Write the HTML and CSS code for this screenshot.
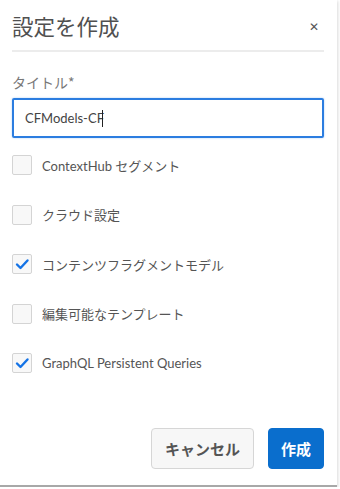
FILE: index.html
```html
<!DOCTYPE html>
<html lang="ja">
<head>
  <meta charset="UTF-8">
  <meta name="viewport" content="width=device-width, initial-scale=1.0">
  <title>設定を作成</title>
  <link rel="stylesheet" href="styles.css">
</head>
<body>

<div class="dialog">
  <div class="header">
    <h1>設定を作成</h1>
    <span class="close">&#x2715;</span>
  </div>

  <label class="field-label">タイトル*</label>
  <div class="input"><span>CFModels-CF</span><span class="caret"></span></div>

  <ul class="options">
    <li><span class="box"></span>ContextHub セグメント</li>
    <li><span class="box"></span>クラウド設定</li>
    <li><span class="box checked"><svg viewBox="0 0 18 18"><path d="M4 9.5 L7.5 13 L14.5 5.5"/></svg></span>コンテンツフラグメントモデル</li>
    <li><span class="box"></span>編集可能なテンプレート</li>
    <li><span class="box checked"><svg viewBox="0 0 18 18"><path d="M4 9.5 L7.5 13 L14.5 5.5"/></svg></span>GraphQL Persistent Queries</li>
  </ul>

  <div class="footer">
    <button class="btn cancel">キャンセル</button>
    <button class="btn primary">作成</button>
  </div>
</div>

</body>
</html>
```

FILE: styles.css
```css
body {
  margin: 0;
  background-color: #ffffff;
  font-family: Lato, "Noto Sans CJK JP", sans-serif;
  color: #4b4b4b;
}
.dialog {
  width: 337px;
  height: 487px;
  box-sizing: border-box;
  padding: 0 13px 0 12px;
  background: #fff;
  border-bottom: 2px solid #a8a8a8;
  box-shadow: 1px 1px 3px rgba(0, 0, 0, 0.15);
  display: flex;
  flex-direction: column;
}
.header {
  display: flex;
  justify-content: space-between;
  align-items: center;
  height: 50px;
  border-bottom: 2px solid #ececec;
}
.header h1 {
  margin: 0;
  font-family: "Noto Sans CJK JP", sans-serif;
  font-weight: 400;
  font-size: 21.5px;
  color: #505050;
  padding-top: 1px;
}
.close {
  font-size: 12px;
  color: #555;
  margin-right: 5px;
  margin-top: 2px;
}
.field-label {
  display: block;
  margin-top: 20px;
  font-family: "Noto Sans CJK JP", sans-serif;
  font-size: 14px;
  color: #787878;
}
.input {
  margin-top: 6px;
  height: 40px;
  box-sizing: border-box;
  border: 2px solid #2b7de0;
  border-radius: 2px;
  padding-left: 11px;
  display: flex;
  align-items: center;
  font-size: 13px;
  color: #444;
  box-shadow: 0 0 2px rgba(38, 128, 235, 0.4);
}
.caret {
  display: inline-block;
  width: 1px;
  height: 17px;
  margin-left: -2px;
  background: #222;
}
.options {
  list-style: none;
  margin: 17px 0 0 0;
  padding: 0;
}
.options li {
  display: flex;
  align-items: center;
  height: 20px;
  margin-bottom: 29.5px;
  font-size: 13px;
  color: #555;
}
.box {
  width: 18px;
  height: 18px;
  border: 1px solid #d4d4d4;
  border-radius: 2px;
  background: #f8f8f8;
  margin-right: 10px;
  flex-shrink: 0;
}
.box svg {
  display: block;
  width: 18px;
  height: 18px;
}
.box svg path {
  fill: none;
  stroke: #1473e6;
  stroke-width: 2.4;
  stroke-linecap: round;
  stroke-linejoin: round;
}
.footer {
  margin-top: auto;
  margin-bottom: 16px;
  display: flex;
  justify-content: flex-end;
  gap: 14px;
}
.btn {
  height: 41px;
  border-radius: 4px;
  font-family: "Noto Sans CJK JP", sans-serif;
  font-weight: 700;
  font-size: 15px;
  padding: 0;
  white-space: nowrap;
}
.cancel {
  width: 103px;
  background: #f7f7f7;
  border: 1px solid #d6d6d6;
  color: #555;
}
.primary {
  width: 56px;
  background: #0a6ecd;
  border: 1px solid #0a6ecd;
  color: #fff;
}
```
